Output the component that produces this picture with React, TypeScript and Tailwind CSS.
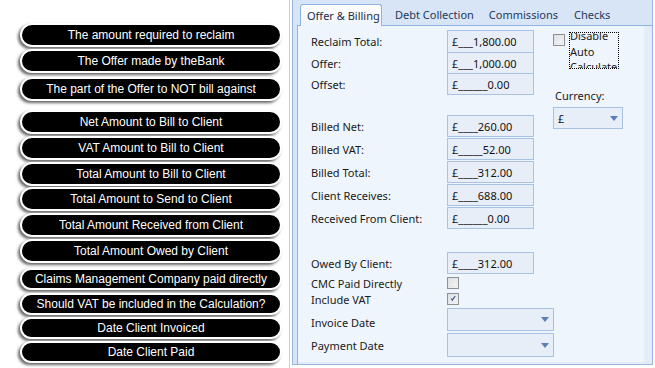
import React from "react";

const pills: { t: string; c: string }[] = [
  { t: "The amount required to reclaim", c: "mt-[23px] h-[24px]" },
  { t: "The Offer made by theBank", c: "mt-[2px] h-[24px]" },
  { t: "The part of the Offer to NOT bill against", c: "mt-[4px] h-[24px]" },
  { t: "Net Amount to Bill to Client", c: "mt-[9px] h-[24px]" },
  { t: "VAT Amount to Bill to Client", c: "mt-[2px] h-[24px]" },
  { t: "Total Amount to Bill to Client", c: "mt-[2px] h-[24px]" },
  { t: "Total Amount to Send to Client", c: "mt-px h-[24px]" },
  { t: "Total Amount Received from Client", c: "mt-[2px] h-[24px]" },
  { t: "Total Amount Owed by Client", c: "mt-[2px] h-[24px]" },
  { t: "Claims Management Company paid directly", c: "mt-[5px] h-[22px]" },
  { t: "Should VAT be included in the Calculation?", c: "mt-[3px] h-[22px]" },
  { t: "Date Client Invoiced", c: "mt-[2px] h-[22px]" },
  { t: "Date Client Paid", c: "mt-[2px] h-[22px]" },
];

const Arrow = () => (
  <svg width="8" height="5" viewBox="0 0 8 5">
    <polygon points="0,0 8,0 4,5" fill="#5b7fb5" />
  </svg>
);

const Money = ({ v, c }: { v: string; c: string }) => (
  <div
    className={`w-[87px] border border-[#a9c2e4] bg-[#e8eef7] pl-[4px] flex items-center text-[#111] ${c}`}
  >
    {v}
  </div>
);

const Check = ({ checked }: { checked?: boolean }) => (
  <div className="w-[12px] h-[12px] border border-[#8f9194] bg-gradient-to-br from-[#d9dbde] to-[#f7f7f7] flex items-center justify-center">
    <div className="w-[8px] h-[8px] border border-[#e6e8eb] bg-gradient-to-br from-[#dfe2e6] to-[#f4f4f4] flex items-center justify-center">
      {checked && (
        <svg width="9" height="9" viewBox="0 0 9 9" className="-mt-px">
          <path d="M1.5 4.5 L3.5 7 L7.8 1" stroke="#4a5f86" strokeWidth="1.8" fill="none" />
        </svg>
      )}
    </div>
  </div>
);

const Row = ({
  label,
  children,
  c,
  lc = "",
}: {
  label: string;
  children: React.ReactNode;
  c: string;
  lc?: string;
}) => (
  <div className={`flex items-center ${c}`}>
    <div className={`w-[136px] shrink-0 text-[#1a1a1a] ${lc}`}>{label}</div>
    {children}
  </div>
);

export default function App() {
  return (
    <div className="flex w-[655px] h-[368px] overflow-hidden bg-white">
      {/* Left legend */}
      <div
        className="w-[290px] shrink-0 border-r border-[#d2d2d2] bg-white flex flex-col"
        style={{ fontFamily: '"Liberation Sans", Arial, sans-serif' }}
      >
        {pills.map((p) => (
          <div
            key={p.t}
            className={`ml-[20px] w-[262px] shrink-0 rounded-full border-2 border-white bg-black text-white text-[12px] leading-none flex items-center justify-center shadow-[-2px_2px_3px_rgba(0,0,0,0.6)] ${p.c}`}
          >
            {p.t}
          </div>
        ))}
      </div>
      <div className="w-[2px] shrink-0 bg-white" />
      {/* Right form */}
      <div
        className="w-[361px] h-[365px] shrink-0 border-l border-r border-b border-[#9ab7e0] bg-[#d8e5f7] flex flex-col text-[11px] leading-[15px]"
        style={{ fontFamily: '"Noto Sans", "Open Sans", sans-serif' }}
      >
        {/* Tabs */}
        <div className="h-[25px] shrink-0 flex items-end pl-[7px] text-[#1e395b]">
          <div className="h-[22px] w-[82px] border border-b-0 border-[#8db2e3] rounded-t-[3px] bg-gradient-to-b from-[#ffffff] to-[#eef5fd] flex items-center pl-[6px] text-[#1f2d44] -mb-px relative z-10">
            Offer &amp; Billing
          </div>
          <div className="h-[22px] flex items-center ml-[13px]">Debt Collection</div>
          <div className="h-[22px] flex items-center ml-[15px]">Commissions</div>
          <div className="h-[22px] flex items-center ml-[16px]">Checks</div>
        </div>
        {/* Panel */}
        <div className="flex-1 ml-[4px] border-l border-t border-[#8db2e3] bg-[#e3ecf8] flex flex-col">
          <div className="flex-1 mr-[8px] mb-[2px] bg-[#eef5fd] flex">
            {/* Form column */}
            <div className="w-[255px] shrink-0 pl-[13px] pt-[4px] flex flex-col">
              <Row label="Reclaim Total:" c="">
                <Money v="£___1,800.00" c="h-[23px]" />
              </Row>
              <Row label="Offer:" c="">
                <Money v="£___1,000.00" c="h-[22px] -mt-px" />
              </Row>
              <Row label="Offset:" c="">
                <Money v="£______0.00" c="h-[22px] -mt-px" />
              </Row>
              <Row label="Billed Net:" c="mt-[20px]">
                <Money v="£____260.00" c="h-[22px]" />
              </Row>
              <Row label="Billed VAT:" c="mt-px">
                <Money v="£_____52.00" c="h-[22px]" />
              </Row>
              <Row label="Billed Total:" c="mt-px">
                <Money v="£____312.00" c="h-[22px]" />
              </Row>
              <Row label="Client Receives:" c="mt-px">
                <Money v="£____688.00" c="h-[22px]" />
              </Row>
              <Row label="Received From Client:" c="mt-px">
                <Money v="£______0.00" c="h-[22px]" />
              </Row>
              <Row label="Owed By Client:" c="mt-[23px]">
                <Money v="£____312.00" c="h-[22px]" />
              </Row>
              <Row label="CMC Paid Directly" c="mt-[3px] h-[12px]">
                <Check />
              </Row>
              <Row label="Include VAT" c="mt-[4px] h-[12px]">
                <Check checked />
              </Row>
              <Row label="Invoice Date" c="mt-[3px]" lc="pt-[6px]">
                <div className="w-[107px] shrink-0 h-[23px] border border-[#a9c2e4] bg-[#e8eef7] flex items-center justify-end pr-[4px]">
                  <Arrow />
                </div>
              </Row>
              <Row label="Payment Date" c="mt-[2px]">
                <div className="w-[107px] shrink-0 h-[24px] border border-[#a9c2e4] bg-[#e8eef7] flex items-center justify-end pr-[4px]">
                  <Arrow />
                </div>
              </Row>
            </div>
            {/* Right column */}
            <div className="pt-[6px] flex flex-col">
              <div className="flex items-start">
                <div className="mt-[2px]">
                  <Check />
                </div>
                <div className="ml-[4px] w-[50px] h-[37px] border border-dotted border-black overflow-hidden text-[#1a1a1a]">
                  <div className="-mt-[5px] leading-[15.5px]">
                    Disable
                    <br />
                    Auto
                    <br />
                    Calculate
                  </div>
                </div>
              </div>
              <div className="mt-[19px] pl-[2px] text-[#1a1a1a]">Currency:</div>
              <div className="mt-[4px] w-[70px] h-[22px] border border-[#a9c2e4] bg-[#e8eef7] flex items-center justify-between pl-[4px] pr-[4px] text-[#111]">
                <span>£</span>
                <Arrow />
              </div>
            </div>
          </div>
        </div>
      </div>
    </div>
  );
}
